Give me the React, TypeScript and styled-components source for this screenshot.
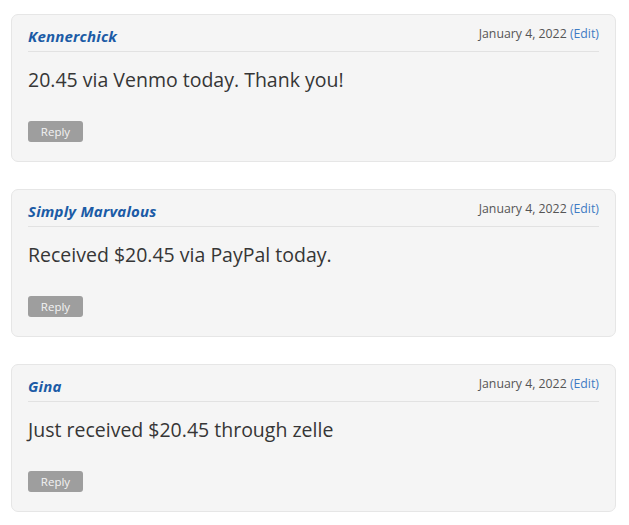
import React from 'react';
import styled, { createGlobalStyle } from 'styled-components';

const GlobalStyle = createGlobalStyle`
  body {
    margin: 0;
    background: #ffffff;
    font-family: "Open Sans", "Liberation Sans", sans-serif;
  }
`;

const List = styled.div`
  display: flex;
  flex-direction: column;
  gap: 27px;
  padding: 14px 13px 0 11px;
`;

const Card = styled.div`
  background: #f5f5f5;
  border: 1px solid #e6e6e6;
  border-radius: 7px;
  padding: 11px 16px 18px 16px;
  height: 148px;
  box-sizing: border-box;
`;

const Header = styled.div`
  display: flex;
  justify-content: space-between;
  align-items: flex-start;
  border-bottom: 1px solid #e2e2e2;
  height: 26px;
  box-sizing: border-box;
`;

const Author = styled.a`
  color: #1b5ba6;
  font-weight: 700;
  font-style: italic;
  font-size: 15px;
  line-height: 20px;
  letter-spacing: 0.2px;
  text-decoration: none;
`;

const Meta = styled.div`
  color: #555555;
  font-size: 12.3px;
  line-height: 16px;
`;

const EditLink = styled.a`
  color: #3f7cc4;
  text-decoration: none;
`;

const Body = styled.p`
  margin: 14px 0 0;
  font-size: 19.5px;
  line-height: 28px;
  color: #363636;
`;

const ReplyButton = styled.button`
  margin-top: 27px;
  width: 55px;
  height: 21px;
  border: none;
  border-radius: 3px;
  background: #9e9e9e;
  color: #f3f3f3;
  font-family: inherit;
  font-size: 11.5px;
  padding: 0;
  cursor: pointer;
`;

const comments = [
  { author: 'Kennerchick', date: 'January 4, 2022', text: '20.45 via Venmo today. Thank you!' },
  { author: 'Simply Marvalous', date: 'January 4, 2022', text: 'Received $20.45 via PayPal today.' },
  { author: 'Gina', date: 'January 4, 2022', text: 'Just received $20.45 through zelle' },
];

export default function App() {
  return (
    <>
      <GlobalStyle />
      <List>
        {comments.map((c) => (
          <Card key={c.author}>
            <Header>
              <Author href="#">{c.author}</Author>
              <Meta>
                {c.date} <EditLink href="#">(Edit)</EditLink>
              </Meta>
            </Header>
            <Body>{c.text}</Body>
            <ReplyButton>Reply</ReplyButton>
          </Card>
        ))}
      </List>
    </>
  );
}
